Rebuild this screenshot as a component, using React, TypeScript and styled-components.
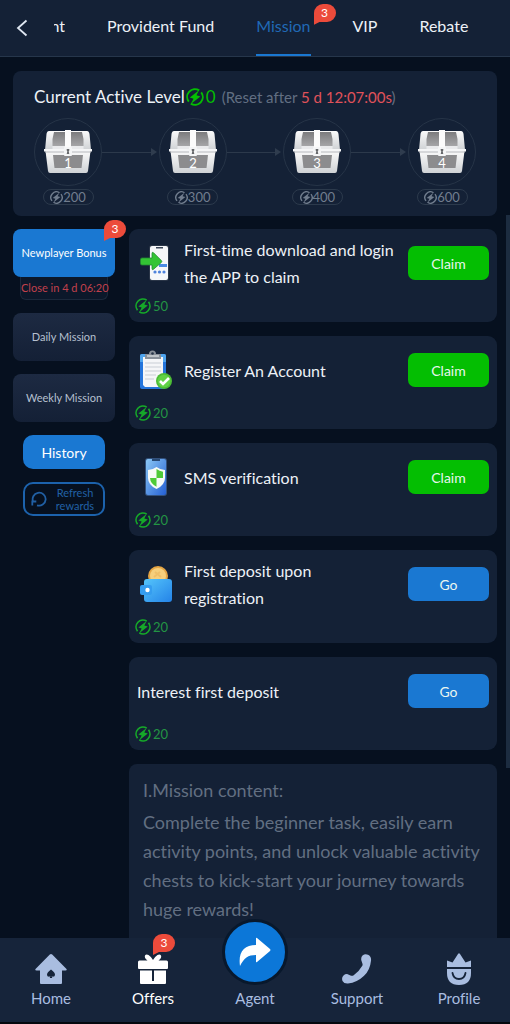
import React from 'react';
import styled, { createGlobalStyle, css } from 'styled-components';

const color = {
  page: '#06101f',
  panel: '#142136',
  nav: '#16243a',
  line: '#26364b',
  blue: '#1a78d2',
  green: '#04be02',
  red: '#ec4b3b',
  muted: '#626f82',
  pale: '#a9bde0',
  text: '#edf1f7',
};

const GlobalStyle = createGlobalStyle`
  * { box-sizing: border-box; }
  body { margin: 0; background: ${color.page}; }
  body, button { font-family: Lato, "Liberation Sans", sans-serif; font-variant-ligatures: none; }
  button { border: 0; padding: 0; cursor: pointer; }
  h1, h2, p, ul, ol { margin: 0; padding: 0; font-weight: 400; }
  ul, ol { list-style: none; }
  a { color: inherit; text-decoration: none; }
`;

const Screen = styled.div`
  display: flex;
  flex-direction: column;
  height: 100vh;
  color: ${color.text};
  background: ${color.page};
`;

const Header = styled.header`
  display: flex;
  flex: none;
  background: ${color.panel};
  border-bottom: 1px solid ${color.line};
`;

const BackButton = styled.button`
  flex: none;
  width: 54px;
  padding-left: 16px;
  text-align: left;
  line-height: 0;
  background: none;
`;

const Tabs = styled.nav`
  display: flex;
  flex: 1;
  gap: 42px;
  min-width: 0;
  overflow: hidden;
`;

const Tab = styled.a<{ $active?: boolean; $clipped?: boolean }>`
  position: relative;
  flex: none;
  padding: 16px 0 18px;
  font-size: 16px;
  line-height: 20px;
  border-bottom: 2px solid ${p => (p.$active ? color.blue : 'transparent')};
  color: ${p => (p.$active ? '#2069b5' : color.text)};
  ${p => p.$clipped && css`
    display: flex;
    justify-content: flex-end;
    width: 11px;
    overflow: hidden;
  `}
`;

const Badge = styled.span<{ $top: number; $right: number }>`
  position: absolute;
  z-index: 2;
  top: ${p => p.$top}px;
  right: ${p => p.$right}px;
  width: 22px;
  height: 18px;
  border-radius: 9px 9px 9px 4px;
  background: ${color.red};
  color: #fff;
  font-size: 12px;
  line-height: 18px;
  text-align: center;
  &::after {
    content: '';
    position: absolute;
    left: 0;
    top: 10px;
    width: 9px;
    height: 11px;
    background: ${color.red};
    clip-path: polygon(0 0, 100% 60%, 0 100%);
  }
`;

const Main = styled.main`
  flex: 1;
  min-height: 0;
  padding: 14px 13px 0;
  overflow: hidden;
`;

const ScrollThumb = styled.div`
  position: absolute;
  right: 0;
  top: 21%;
  width: 4px;
  height: 54%;
  background: #1c2c40;
`;

const LevelPanel = styled.section`
  padding: 16px 21px 11px;
  border-radius: 8px;
  background: ${color.panel};
`;

const LevelTitle = styled.div`
  display: flex;
  align-items: center;
  height: 20px;
  line-height: 20px;
  white-space: nowrap;
`;

const LevelName = styled.h1`
  margin-right: 1px;
  font-size: 17px;
`;

const LevelValue = styled.span`
  margin: 0 6px 0 2px;
  color: ${color.green};
  font-size: 17px;
`;

const ResetNote = styled.span`
  color: ${color.muted};
  font-size: 15px;
`;

const Countdown = styled.span`
  color: #e0525a;
`;

const Chests = styled.ol`
  display: flex;
  align-items: flex-start;
  margin-top: 11px;
`;

const ChestStep = styled.li`
  display: flex;
  flex: none;
  flex-direction: column;
  align-items: center;
  width: 68px;
`;

const ChestRing = styled.div`
  display: flex;
  align-items: center;
  justify-content: center;
  width: 68px;
  height: 68px;
  border: 1px solid #263447;
  border-radius: 50%;
`;

const ChestPoints = styled.div`
  display: flex;
  align-items: center;
  justify-content: center;
  width: 51px;
  height: 16px;
  margin-top: 3px;
  border: 1px solid #2c3a4c;
  border-radius: 8px;
  color: #717d8e;
  font-size: 13px;
  line-height: 14px;
`;

const Connector = styled.li`
  display: flex;
  flex: 1;
  align-items: center;
  height: 68px;
  padding-right: 2px;
  &::before {
    content: '';
    flex: 1;
    height: 1px;
    background: #2c394b;
  }
  &::after {
    content: '';
    border-left: 6px solid #2f3c4e;
    border-top: 4px solid transparent;
    border-bottom: 4px solid transparent;
  }
`;

const Columns = styled.div`
  display: flex;
  align-items: flex-start;
  gap: 14px;
  margin-top: 13px;
`;

const Side = styled.aside`
  display: flex;
  flex: none;
  flex-direction: column;
  align-items: center;
  gap: 13px;
  width: 102px;
`;

const CategoryGroup = styled.div`
  position: relative;
  display: flex;
  flex-direction: column;
  align-items: center;
  width: 100%;
`;

const CategoryButton = styled.button<{ $active?: boolean }>`
  width: 100%;
  height: 48px;
  border-radius: 8px;
  font-size: 11px;
  line-height: 16px;
  color: ${p => (p.$active ? '#fff' : '#b6c0d0')};
  background: ${p => (p.$active ? color.blue : 'linear-gradient(#1d2a42, #142036)')};
`;

const ClosingNote = styled.div`
  width: 88px;
  height: 23px;
  border: 1px solid #1c293b;
  border-top: 0;
  border-radius: 0 0 6px 6px;
  color: #c1404c;
  background: #0c182a;
  font-size: 11px;
  line-height: 22px;
  text-align: center;
  white-space: nowrap;
`;

const HistoryButton = styled.button`
  width: 82px;
  height: 34px;
  border-radius: 10px;
  color: #fff;
  background: ${color.blue};
  font-size: 14px;
`;

const RefreshButton = styled.button`
  display: flex;
  align-items: center;
  gap: 6px;
  width: 82px;
  height: 34px;
  padding: 0 6px;
  border: 2px solid #1c62ac;
  border-radius: 10px;
  color: #2160a5;
  background: none;
  font-size: 11px;
  line-height: 13px;
  svg { flex: none; }
`;

const Missions = styled.div`
  display: flex;
  flex: 1;
  flex-direction: column;
  gap: 14px;
  min-width: 0;
`;

const MissionCard = styled.article`
  padding: 6px 8px 8px 6px;
  border-radius: 9px;
  background: ${color.panel};
`;

const MissionTop = styled.div`
  display: flex;
  align-items: center;
  gap: 9px;
  min-height: 56px;
  padding-left: 2px;
`;

const MissionIcon = styled.div`
  display: flex;
  flex: none;
  justify-content: center;
  width: 38px;
`;

const MissionTitle = styled.h2`
  flex: 1;
  font-size: 16px;
  line-height: 27px;
  white-space: pre-line;
`;

const ActionButton = styled.button<{ $claim: boolean }>`
  flex: none;
  width: 81px;
  height: 34px;
  border-radius: 7px;
  color: #e9f6f0;
  background: ${p => (p.$claim ? color.green : color.blue)};
  font-size: 14px;
`;

const Reward = styled.div`
  display: flex;
  align-items: center;
  gap: 2px;
  margin-top: 7px;
  color: #239444;
  font-size: 13px;
  line-height: 16px;
`;

const InfoPanel = styled.section`
  padding: 12px 14px 30px;
  border-radius: 8px;
  background: ${color.panel};
  color: ${color.muted};
  font-size: 18px;
  line-height: 29px;
`;

const InfoHeading = styled.h2`
  margin-bottom: 3px;
  font-size: 18px;
`;

const BottomNav = styled.nav`
  display: flex;
  flex: none;
  background: ${color.nav};
  border-bottom: 2px solid #04080e;
`;

const NavItem = styled.a<{ $active?: boolean }>`
  position: relative;
  display: flex;
  flex: 1;
  flex-direction: column;
  align-items: center;
  padding: 12px 0 14px;
  color: ${p => (p.$active ? '#fff' : color.pale)};
  font-size: 15px;
  line-height: 20px;
`;

const NavIcon = styled.span`
  position: relative;
  display: flex;
  align-items: center;
  justify-content: center;
  height: 38px;
  line-height: 18px;
`;

const AgentDisc = styled.span`
  position: absolute;
  top: -19px;
  display: flex;
  align-items: center;
  justify-content: center;
  width: 66px;
  height: 66px;
  border: 3px solid #08182c;
  border-radius: 50%;
  background: #0c77d8;
`;

function Coin({ size, tint }: { size: number; tint: string }) {
  return (
    <svg width={size} height={size} viewBox="0 0 18 18" fill="none" aria-hidden="true">
      <path d="M13.200 2.400A7.800 7.800 0 0 0 2.800 13.700M4.800 15.600A7.800 7.800 0 0 0 15.200 4.300" stroke={tint} strokeWidth="1.900" />
      <path d="M13 2.300 3.800 9.600l3.700 1.200L4.800 16l9.600-7.600-3.900-1.200z" fill={tint} />
    </svg>
  );
}

function Chest({ level }: { level: number }) {
  return (
    <svg width="48" height="44" viewBox="0 0 48 44" aria-hidden="true">
      <defs>
        <linearGradient id={`chest${level}`} x1="0" y1="0" x2="0" y2="1">
          <stop offset="0" stopColor="#fafafa" />
          <stop offset="1" stopColor="#cfd2d5" />
        </linearGradient>
        <linearGradient id={`lid${level}`} x1="0" y1="0" x2="0" y2="1">
          <stop offset="0" stopColor="#7c7c7e" />
          <stop offset="1" stopColor="#a5a5a7" />
        </linearGradient>
      </defs>
      <path d="M5 1h38q2 0 2.500 3L47 20H1L2.500 4Q3 1 5 1z" fill={`url(#chest${level})`} />
      <path d="M10 2h28q2 6 1.500 14H8.500Q8 8 10 2z" fill={`url(#lid${level})`} />
      <path d="M8.500 16h31v4h-31z" fill="#e9eaec" />
      <path d="M1.500 21h45L44 41q-.3 2-2 2H6q-1.700 0-2-2z" fill={`url(#chest${level})`} />
      <path d="M9 25h30l-1.500 13h-27z" fill="#8c8c8e" />
      <path d="M0 19h48v2.500H0z" fill="#f5f6f7" />
      <path d="M1 21.500h46v1H1z" fill="#b5b8bb" />
      <path d="M21 0h6v20h-6z" fill="#fbfbfb" />
      <rect x="20" y="17" width="8" height="9" rx="1" fill="#f4f5f6" />
      <path d="M22.700 19h2.600v1.500l-.6.7.6 2.800h-2.600l.6-2.800-.6-.7z" fill="#66686b" />
      <text x="24" y="38" textAnchor="middle" fontSize="13" fill="#fff">{level}</text>
    </svg>
  );
}

function LoginArt() {
  return (
    <svg width="36" height="38" viewBox="0 0 36 38" aria-hidden="true">
      <rect x="11" y="1" width="20" height="36" rx="3" fill="#2a3547" />
      <rect x="12" y="2" width="18" height="34" rx="2" fill="#f6f7f9" />
      <path d="M18 3h7v1.500h-7z" fill="#394456" />
      <path d="M21 20h8v3h-8z" fill="#4b8be4" />
      <g fill="#4f83dc"><circle cx="17" cy="28" r="1.600" /><circle cx="21.500" cy="28" r="1.600" /><circle cx="26" cy="28" r="1.600" /></g>
      <path d="M4 14h10V9.500q0-2 1.600-.7l7.700 7.700q1 1 0 2l-7.700 6.700q-1.600 1.300-1.600-.7V21H4q-1.500 0-1.500-1.500v-4Q2.500 14 4 14z" fill="#33c434" stroke="#228c32" strokeWidth=".8" />
    </svg>
  );
}

function ClipboardArt() {
  return (
    <svg width="36" height="40" viewBox="0 0 36 40" aria-hidden="true">
      <rect x="2" y="4" width="26" height="35" rx="2" fill="#2575dc" />
      <path d="M2 12V6q0-2 2-2h22q2 0 2 2v6z" fill="#50a5ee" />
      <path d="M5 7h20v30H7l-2-2z" fill="#f5f6f8" />
      <path d="M7 13h16M7 17h16M7 21h16M7 25h11M7 29h9" stroke="#c9ced5" />
      <path d="M11 4q0-3.500 3.500-3.500T18 4h4q1 0 1 1v4H7V5q0-1 1-1z" fill="#899099" />
      <circle cx="14.500" cy="3.500" r="1.300" fill="#273448" />
      <path d="M9 5h12v2H9z" fill="#bfc4c9" />
      <circle cx="26" cy="31" r="8" fill="#4cbd35" />
      <circle cx="26" cy="31" r="6.300" fill="#61d246" />
      <path d="m22 31 3 3 6-6" fill="none" stroke="#fff" strokeWidth="2.600" />
    </svg>
  );
}

function ShieldArt() {
  return (
    <svg width="36" height="38" viewBox="0 0 36 38" aria-hidden="true">
      <defs>
        <linearGradient id="shieldPhone" x1="0" y1="0" x2="1" y2="1">
          <stop offset="0" stopColor="#8bc8f5" />
          <stop offset="1" stopColor="#2560d4" />
        </linearGradient>
      </defs>
      <rect x="7" y="0" width="22" height="38" rx="3" fill="#33517c" />
      <rect x="8" y="1" width="20" height="36" rx="2" fill="url(#shieldPhone)" />
      <path d="M14 1h8v2h-8z" fill="#284a75" />
      <path d="M18.500 9q4 3 8.500 3v8q0 7-8.500 11-8.500-4-8.500-11v-8q4.500 0 8.500-3z" fill="#f7faf7" />
      <path d="M18.500 11q3 2.300 6.500 2.800V20h-6.500zM18.500 20H12q.3 5.500 6.500 8.700z" fill="#4fca38" />
    </svg>
  );
}

function WalletArt() {
  return (
    <svg width="34" height="38" viewBox="0 0 34 38" aria-hidden="true">
      <defs>
        <linearGradient id="walletBody" x1="0" y1="0" x2="1" y2="1">
          <stop offset="0" stopColor="#55c5fb" />
          <stop offset="1" stopColor="#2483e8" />
        </linearGradient>
      </defs>
      <circle cx="19" cy="11" r="10" fill="#e5a544" />
      <circle cx="19" cy="11" r="8" fill="#f6cf7c" />
      <path d="m16 7 6 5m-7 0 6-5" stroke="#efbf69" strokeWidth="2" />
      <rect x="5" y="14" width="28" height="23" rx="3" fill="url(#walletBody)" />
      <path d="M3 20h8q2 0 2 2v6q0 2-2 2H3q-2 0-2-2v-6q0-2 2-2z" fill="#359df0" />
      <circle cx="8.500" cy="25" r="2.200" fill="#fff" />
    </svg>
  );
}

function HomeIcon() {
  return (
    <svg width="32" height="30" viewBox="0 0 32 30" fill="currentColor" aria-hidden="true">
      <path d="M14.800.6q1.200-1 2.400 0L31.500 15q.8 1.500-1 1.500H27V29q0 1-1 1H6q-1 0-1-1V16.500H1.500q-1.800 0-1-1.500z" />
      <path d="M16 15.500q-4 3-4 5.200 0 2 2 2 .8 0 1.400-.6L14.700 24h2.600l-.7-1.900q.6.600 1.400.6 2 0 2-2 0-2.200-4-5.200z" fill="#16243a" />
    </svg>
  );
}

function GiftIcon() {
  return (
    <svg width="30" height="30" viewBox="0 0 30 30" fill="currentColor" aria-hidden="true">
      <path d="M1.500 6.500h8Q6 4 7 1.500q1-1.500 3.500-.5Q13 2.500 15 6q2-3.500 4.500-5 2.500-1 3.500.5 1 2.500-2.500 5h8q1.500 0 1.500 1.500v6q0 1-1 1H1q-1 0-1-1V8q0-1.500 1.500-1.500z" />
      <path d="M2 16.500h12V30H3q-1 0-1-1zM16 16.500h12V29q0 1-1 1H16z" />
      <path d="M14 27h2v3h-2z" />
    </svg>
  );
}

function ShareIcon() {
  return (
    <svg width="32" height="30" viewBox="0 0 32 30" fill="#fff" aria-hidden="true">
      <path d="M1 29C-1 15 5 8 17 8V1.500q0-1.200 1-.4l13 11q.9.900 0 1.800L18 25q-1 .8-1-.4V18C9 18 5 21 1 29z" />
    </svg>
  );
}

function PhoneIcon() {
  return (
    <svg width="30" height="30" viewBox="0 0 30 30" fill="currentColor" aria-hidden="true">
      <path d="M20.500 1.500Q23-.5 26 .7q3.500 1.500 3 6-1 9.800-7.200 15.300Q15 28.500 6 29.500q-4 .3-5.500-2.600-1.200-3 1-5.400 1.600-1.500 3.600-1.400l4 1.600q1.400.4 2.600-.5 5.500-3.800 8.600-9.400.6-1.300 0-2.600l-1-3q-.5-3 1.200-4.700z" />
    </svg>
  );
}

function ProfileIcon() {
  return (
    <svg width="26" height="32" viewBox="0 0 26 32" fill="currentColor" aria-hidden="true">
      <path d="M1 14V7.500l5.500 2L12 1q1-1.300 2 0l5.500 8.500 5.500-2V14z" />
      <path d="M1 16h24v4q0 12-12 12T1 20z" />
      <path d="M6.500 20q1 6 6.500 6t6.500-6" fill="none" stroke="#16243a" strokeWidth="1.800" strokeLinecap="round" />
    </svg>
  );
}

const chestPoints = [200, 300, 400, 600];

const missions = [
  { title: 'First-time download and login\nthe APP to claim', reward: 50, action: 'Claim', art: <LoginArt /> },
  { title: 'Register An Account', reward: 20, action: 'Claim', art: <ClipboardArt /> },
  { title: 'SMS verification', reward: 20, action: 'Claim', art: <ShieldArt /> },
  { title: 'First deposit upon\nregistration', reward: 20, action: 'Go', art: <WalletArt /> },
  { title: 'Interest first deposit', reward: 20, action: 'Go', art: null },
];

export default function App() {
  return (
    <Screen>
      <GlobalStyle />
      <Header>
        <BackButton aria-label="Back">
          <svg width="12" height="18" viewBox="0 0 12 18" fill="none" stroke="#dfe7f2" strokeWidth="1.800">
            <path d="M10.500 1.500 2 9l8.500 7.500" />
          </svg>
        </BackButton>
        <Tabs>
          <Tab href="#event" $clipped>nt</Tab>
          <Tab href="#fund">Provident Fund</Tab>
          <Tab href="#mission" $active>Mission<Badge $top={4} $right={-25}>3</Badge></Tab>
          <Tab href="#vip">VIP</Tab>
          <Tab href="#rebate">Rebate</Tab>
        </Tabs>
      </Header>

      <Main>
        <LevelPanel>
          <LevelTitle>
            <LevelName>Current Active Level</LevelName>
            <Coin size={18} tint={color.green} />
            <LevelValue>0</LevelValue>
            <ResetNote>(Reset after <Countdown>5 d 12:07:00s</Countdown>)</ResetNote>
          </LevelTitle>
          <Chests>
            {chestPoints.map((points, i) => (
              <React.Fragment key={points}>
                {i > 0 && <Connector aria-hidden="true" />}
                <ChestStep>
                  <ChestRing><Chest level={i + 1} /></ChestRing>
                  <ChestPoints><Coin size={13} tint="#717d8e" />{points}</ChestPoints>
                </ChestStep>
              </React.Fragment>
            ))}
          </Chests>
        </LevelPanel>

        <Columns>
          <Side>
            <CategoryGroup>
              <CategoryButton $active>Newplayer Bonus</CategoryButton>
              <ClosingNote>Close in 4 d 06:20</ClosingNote>
              <Badge $top={-9} $right={-11}>3</Badge>
            </CategoryGroup>
            <CategoryButton>Daily Mission</CategoryButton>
            <CategoryButton>Weekly Mission</CategoryButton>
            <HistoryButton>History</HistoryButton>
            <RefreshButton>
              <svg width="16" height="16" viewBox="0 0 16 16" fill="none" stroke="currentColor" strokeWidth="1.800" aria-hidden="true">
                <path d="M2.300 11A6.500 6.500 0 1 1 6 14.300M1.300 14.500v-4h4" />
              </svg>
              <span>Refresh rewards</span>
            </RefreshButton>
          </Side>

          <Missions>
            {missions.map(m => (
              <MissionCard key={m.title}>
                <MissionTop>
                  {m.art && <MissionIcon>{m.art}</MissionIcon>}
                  <MissionTitle>{m.title}</MissionTitle>
                  <ActionButton $claim={m.action === 'Claim'}>{m.action}</ActionButton>
                </MissionTop>
                <Reward><Coin size={16} tint="#16a829" />{m.reward}</Reward>
              </MissionCard>
            ))}
            <InfoPanel>
              <InfoHeading>I.Mission content:</InfoHeading>
              <p>
                Complete the beginner task, easily earn activity points, and unlock valuable
                activity chests to kick-start your journey towards huge rewards!
              </p>
            </InfoPanel>
          </Missions>
        </Columns>
      </Main>
      <ScrollThumb />

      <BottomNav>
        <NavItem href="#home"><NavIcon><HomeIcon /></NavIcon>Home</NavItem>
        <NavItem href="#offers" $active>
          <NavIcon><GiftIcon /><Badge $top={-16} $right={-7}>3</Badge></NavIcon>
          Offers
        </NavItem>
        <NavItem href="#agent"><AgentDisc><ShareIcon /></AgentDisc><NavIcon />Agent</NavItem>
        <NavItem href="#support"><NavIcon><PhoneIcon /></NavIcon>Support</NavItem>
        <NavItem href="#profile"><NavIcon><ProfileIcon /></NavIcon>Profile</NavItem>
      </BottomNav>
    </Screen>
  );
}
